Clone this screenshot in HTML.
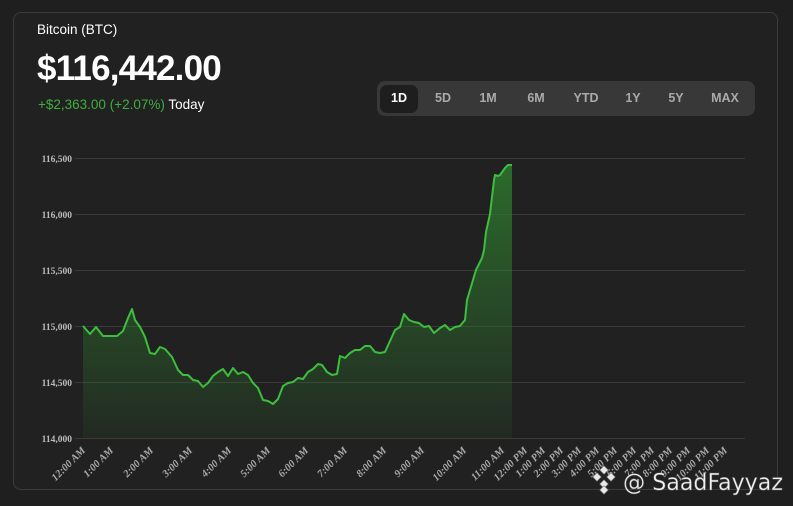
<!DOCTYPE html>
<html><head><meta charset="utf-8"><style>
html,body{margin:0;padding:0;background:#1f1f1f;width:793px;height:506px;overflow:hidden}
.card{position:absolute;left:13px;top:12px;width:765px;height:478px;border:1px solid #3c3c3c;border-radius:8px;background:#212121;box-sizing:border-box}
.t{position:absolute;font-family:"Liberation Sans",sans-serif;color:#fff;white-space:nowrap}
.tabs{position:absolute;left:377px;top:81px;width:378px;height:35px;background:#383838;border-radius:8px}
.tab{position:absolute;top:0;height:35px;line-height:35px;font-family:"Liberation Sans",sans-serif;font-size:12.5px;color:#aaa;font-weight:bold;text-align:center}
.sel{position:absolute;left:3px;top:4px;width:38px;height:28px;background:#1e1e1e;border-radius:7px}
</style></head><body>
<div class="card"></div>
<div class="t" style="left:37px;top:22px;font-size:13.5px">Bitcoin (BTC)</div>
<div class="t" style="left:37px;top:49px;font-size:35px;font-weight:bold;letter-spacing:-0.8px">$116,442.00</div>
<div class="t" style="left:38px;top:97px;font-size:13.5px"><span style="color:#3fae3f">+$2,363.00 (+2.07%)</span> Today</div>
<div class="tabs"><div class="sel"></div>
<div class="tab" style="left:3px;width:38px;color:#fff">1D</div>
<div class="tab" style="left:50px;width:32px">5D</div>
<div class="tab" style="left:95px;width:32px">1M</div>
<div class="tab" style="left:143px;width:32px">6M</div>
<div class="tab" style="left:190px;width:38px">YTD</div>
<div class="tab" style="left:240px;width:32px">1Y</div>
<div class="tab" style="left:283px;width:32px">5Y</div>
<div class="tab" style="left:328px;width:40px">MAX</div>
</div>
<svg width="793" height="506" style="position:absolute;left:0;top:0" font-family="Liberation Serif,serif" font-weight="bold">
<defs><linearGradient id="g" x1="0" y1="0" x2="0" y2="1"><stop offset="0" stop-color="#2e7d2e" stop-opacity=".8"/><stop offset="1" stop-color="#2e7d2e" stop-opacity=".1"/></linearGradient></defs>
<g stroke="#3a3a3a" stroke-width="1">
<line x1="75" y1="158.5" x2="745" y2="158.5"/><line x1="75" y1="214.5" x2="745" y2="214.5"/><line x1="75" y1="270.5" x2="745" y2="270.5"/><line x1="75" y1="326.5" x2="745" y2="326.5"/><line x1="75" y1="382.5" x2="745" y2="382.5"/><line x1="75" y1="438.5" x2="745" y2="438.5"/></g>
<g fill="#bbb" font-size="9.5" text-anchor="end">
<text x="72" y="162">116,500</text><text x="72" y="218">116,000</text><text x="72" y="274">115,500</text><text x="72" y="330">115,000</text><text x="72" y="386">114,500</text><text x="72" y="442">114,000</text></g>
<path d="M83,326 L90,334 96,327 103,336 110,336 117,336 123,331 128,318 132,309 135,320 140,327 145,337 150,353 155,354 160,347 165,349 172,357 178,370 183,375 188,375 193,380 198,381 203,387 208,383 213,376 218,372 223,369 228,376 233,368 238,374 243,372 248,375 253,383 258,388 263,400 268,401 273,404 278,399 283,386 288,383 293,382 298,378 303,379 308,372 313,369 318,364 322,365 327,372 332,375 337,374 340,356 345,358 350,353 355,350 360,350 365,346 370,346 375,352 380,353 385,352 390,341 395,330 400,327 404,314 409,320 414,322 419,323 424,327 429,326 434,333 440,328 445,325 450,330 455,327 460,326 465,320 467,300 470,290 476,270 482,258 484,250 486,232 490,214 494,180 495,175 498,176 500,175 505,168 508,165 512,165 L512,438 L83,438 Z" fill="url(#g)"/>
<path d="M83,326 L90,334 96,327 103,336 110,336 117,336 123,331 128,318 132,309 135,320 140,327 145,337 150,353 155,354 160,347 165,349 172,357 178,370 183,375 188,375 193,380 198,381 203,387 208,383 213,376 218,372 223,369 228,376 233,368 238,374 243,372 248,375 253,383 258,388 263,400 268,401 273,404 278,399 283,386 288,383 293,382 298,378 303,379 308,372 313,369 318,364 322,365 327,372 332,375 337,374 340,356 345,358 350,353 355,350 360,350 365,346 370,346 375,352 380,353 385,352 390,341 395,330 400,327 404,314 409,320 414,322 419,323 424,327 429,326 434,333 440,328 445,325 450,330 455,327 460,326 465,320 467,300 470,290 476,270 482,258 484,250 486,232 490,214 494,180 495,175 498,176 500,175 505,168 508,165 512,165" fill="none" stroke="#3cbf3c" stroke-width="2" stroke-linejoin="round"/>
<g fill="#aaa" font-size="10.5" font-style="italic" text-anchor="end">
<text transform="translate(86,451) rotate(-45)">12:00 AM</text>
<text transform="translate(114,451) rotate(-45)">1:00 AM</text>
<text transform="translate(154,451) rotate(-45)">2:00 AM</text>
<text transform="translate(193,451) rotate(-45)">3:00 AM</text>
<text transform="translate(232,451) rotate(-45)">4:00 AM</text>
<text transform="translate(271,451) rotate(-45)">5:00 AM</text>
<text transform="translate(309,451) rotate(-45)">6:00 AM</text>
<text transform="translate(348,451) rotate(-45)">7:00 AM</text>
<text transform="translate(387,451) rotate(-45)">8:00 AM</text>
<text transform="translate(425,451) rotate(-45)">9:00 AM</text>
<text transform="translate(467,451) rotate(-45)">10:00 AM</text>
<text transform="translate(505,451) rotate(-45)">11:00 AM</text>
<text transform="translate(528,451) rotate(-45)">12:00 PM</text>
<text transform="translate(546,451) rotate(-45)">1:00 PM</text>
<text transform="translate(564,451) rotate(-45)">2:00 PM</text>
<text transform="translate(582,451) rotate(-45)">3:00 PM</text>
<text transform="translate(600,451) rotate(-45)">4:00 PM</text>
<text transform="translate(618,451) rotate(-45)">5:00 PM</text>
<text transform="translate(637,451) rotate(-45)">6:00 PM</text>
<text transform="translate(655,451) rotate(-45)">7:00 PM</text>
<text transform="translate(673,451) rotate(-45)">8:00 PM</text>
<text transform="translate(691,451) rotate(-45)">9:00 PM</text>
<text transform="translate(710,451) rotate(-45)">10:00 PM</text>
<text transform="translate(728,451) rotate(-45)">11:00 PM</text>
</g>
<g fill="#e8e8e8" stroke="#777" stroke-width=".6">
<rect x="601" y="467" width="6" height="6" transform="rotate(45 604 470)"/>
<rect x="594" y="474" width="6" height="6" transform="rotate(45 597 477)"/>
<rect x="608" y="474" width="6" height="6" transform="rotate(45 611 477)"/>
<rect x="601" y="481" width="6" height="6" transform="rotate(45 604 484)"/>
<rect x="601" y="487" width="6" height="6" transform="rotate(45 604 490)"/>
</g>
<text x="623" y="490" fill="#f2f2f2" stroke="#666" stroke-width=".4" font-family="DejaVu Sans Condensed,Liberation Sans Narrow,Liberation Sans,sans-serif" font-stretch="condensed" font-weight="normal" font-size="23" textLength="160" lengthAdjust="spacingAndGlyphs">@ SaadFayyaz</text>
</svg>
</body></html>
